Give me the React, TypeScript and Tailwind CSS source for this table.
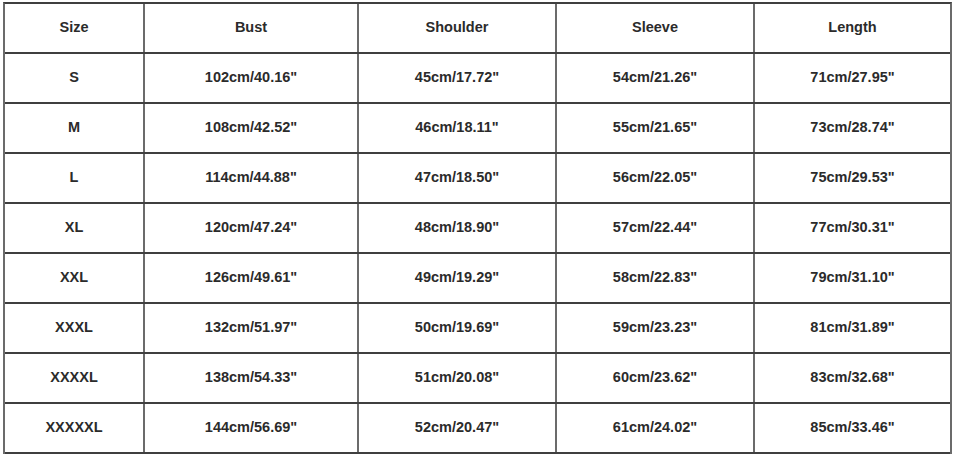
const headers = ["Size", "Bust", "Shoulder", "Sleeve", "Length"];

const rows: string[][] = [
  ["S", '102cm/40.16"', '45cm/17.72"', '54cm/21.26"', '71cm/27.95"'],
  ["M", '108cm/42.52"', '46cm/18.11"', '55cm/21.65"', '73cm/28.74"'],
  ["L", '114cm/44.88"', '47cm/18.50"', '56cm/22.05"', '75cm/29.53"'],
  ["XL", '120cm/47.24"', '48cm/18.90"', '57cm/22.44"', '77cm/30.31"'],
  ["XXL", '126cm/49.61"', '49cm/19.29"', '58cm/22.83"', '79cm/31.10"'],
  ["XXXL", '132cm/51.97"', '50cm/19.69"', '59cm/23.23"', '81cm/31.89"'],
  ["XXXXL", '138cm/54.33"', '51cm/20.08"', '60cm/23.62"', '83cm/32.68"'],
  ["XXXXXL", '144cm/56.69"', '52cm/20.47"', '61cm/24.02"', '85cm/33.46"'],
];

const widths = ["w-[138px]", "w-[214px]", "w-[198px]", "w-[198px]", "w-[197px]"];

function Row({ cells }: { cells: string[] }) {
  return (
    <div className="flex h-[50px] border-b-2 border-[#3f3f3f]">
      {cells.map((c, i) => (
        <div
          key={i}
          className={`${widths[i]} ${
            i > 0 ? "border-l-2 border-[#6b6b6b]" : ""
          } flex items-center justify-center text-[14.5px] font-bold text-[#2b2b2b]`}
        >
          {c}
        </div>
      ))}
    </div>
  );
}

export default function App() {
  return (
    <div
      className="w-[954px] h-[456px] bg-white pl-[3px] pt-[2px]"
      style={{ fontFamily: '"Liberation Sans", Arial, sans-serif' }}
    >
      <div className="w-[949px] border-x-2 border-[#6b6b6b] border-t-2 border-t-[#3f3f3f]">
        <Row cells={headers} />
        {rows.map((r) => (
          <Row key={r[0]} cells={r} />
        ))}
      </div>
    </div>
  );
}
